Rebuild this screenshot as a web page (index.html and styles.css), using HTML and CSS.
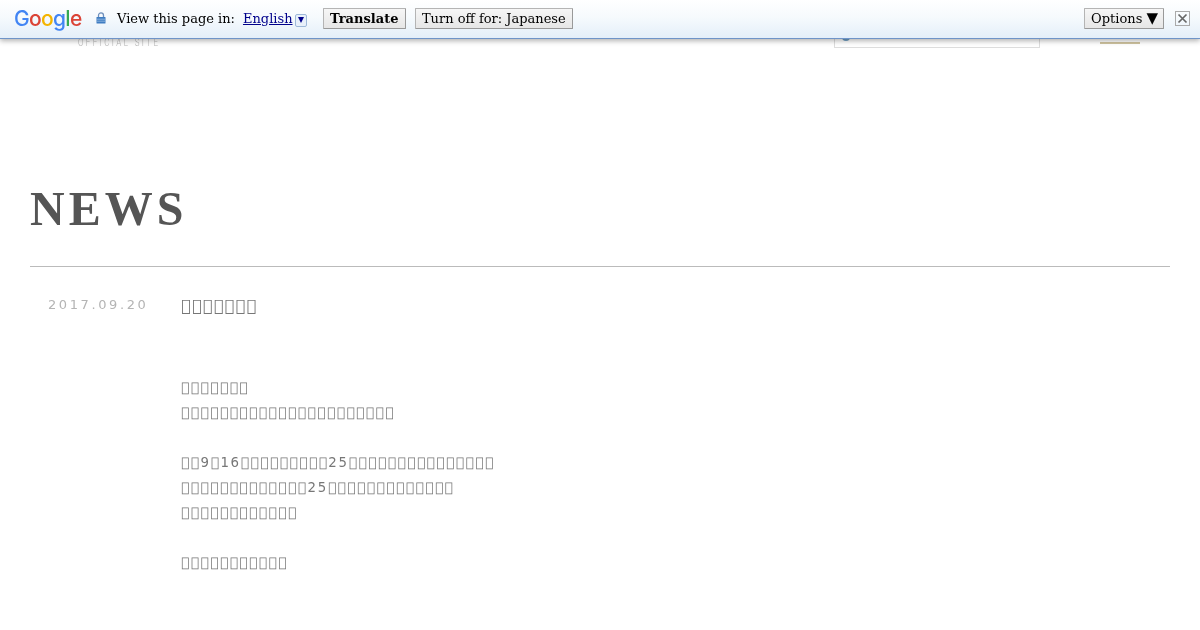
FILE: index.html
```html
<!DOCTYPE html>
<html lang="ja">
<head>
<meta charset="utf-8">
<title>NEWS</title>
<link rel="stylesheet" href="styles.css">
</head>
<body>
<div class="tbar">
  <div class="glogo"><span class="g-b">G</span><span class="g-r">o</span><span class="g-y">o</span><span class="g-b">g</span><span class="g-g">l</span><span class="g-r">e</span></div>
  <svg class="lock" width="10" height="12" viewBox="0 0 10 12"><path d="M2.5 5V3.4a2.5 2.5 0 0 1 5 0V5" fill="none" stroke="#6f90bc" stroke-width="1.3"/><rect x="0.5" y="5" width="9" height="6.5" rx="0.6" fill="#3f7dc2"/><path d="M1 7.2h8M1 9.2h8" stroke="#a9c8e8" stroke-width=".7"/></svg>
  <span class="label">View this page in:</span>
  <a class="lang">English</a>
  <span class="drop"><span class="tri"></span></span>
  <button class="btn first"><b>Translate</b></button>
  <button class="btn">Turn off for: Japanese</button>
  <span class="spacer"></span>
  <button class="btn">Options <span class="caret">▼</span></button>
  <span class="close"><svg width="13" height="13" viewBox="0 0 13 13"><path d="M2.5 2.5l8 8M10.5 2.5l-8 8" stroke="#666" stroke-width="1.7"/></svg></span>
</div>
<header class="head">
  <div class="brand">OFFICIAL SITE</div>
  <div class="search"><span class="search-ico"></span></div>
  <div class="menu"></div>
</header>
<main class="main">
  <h1 class="title">NEWS</h1>
  <article class="entry">
    <div class="date">2017.09.20</div>
    <div class="body">
      <h2 class="subject">&#xE000;&#xE000;&#xE000;&#xE000;&#xE000;&#xE000;&#xE000;</h2>
      <p class="para">&#xE000;&#xE000;&#xE000;&#xE000;&#xE000;&#xE000;&#xE000;<br>&#xE000;&#xE000;&#xE000;&#xE000;&#xE000;&#xE000;&#xE000;&#xE000;&#xE000;&#xE000;&#xE000;&#xE000;&#xE000;&#xE000;&#xE000;&#xE000;&#xE000;&#xE000;&#xE000;&#xE000;&#xE000;&#xE000;</p>
      <p class="para">&#xE000;&#xE000;9&#xE000;16&#xE000;&#xE000;&#xE000;&#xE000;&#xE000;&#xE000;&#xE000;&#xE000;&#xE000;25&#xE000;&#xE000;&#xE000;&#xE000;&#xE000;&#xE000;&#xE000;&#xE000;&#xE000;&#xE000;&#xE000;&#xE000;&#xE000;&#xE000;&#xE000;<br>&#xE000;&#xE000;&#xE000;&#xE000;&#xE000;&#xE000;&#xE000;&#xE000;&#xE000;&#xE000;&#xE000;&#xE000;&#xE000;25&#xE000;&#xE000;&#xE000;&#xE000;&#xE000;&#xE000;&#xE000;&#xE000;&#xE000;&#xE000;&#xE000;&#xE000;&#xE000;<br>&#xE000;&#xE000;&#xE000;&#xE000;&#xE000;&#xE000;&#xE000;&#xE000;&#xE000;&#xE000;&#xE000;&#xE000;</p>
      <p class="para">&#xE000;&#xE000;&#xE000;&#xE000;&#xE000;&#xE000;&#xE000;&#xE000;&#xE000;&#xE000;&#xE000;</p>
    </div>
  </article>
</main>
</body>
</html>
```
FILE: styles.css
```css
html, body { margin: 0; padding: 0; background: #fff; }
body { height: 630px; overflow: hidden; font-family: "DejaVu Sans", sans-serif; color: #555; }

.tbar {
  position: fixed; top: 0; left: 0; right: 0; height: 36px; z-index: 5;
  display: flex; align-items: center; padding: 0 10px 2px 14px;
  background: linear-gradient(#ffffff 0%, #f6fafd 45%, #e4eff9 100%);
  border-bottom: 1px solid #6f94c8;
  box-shadow: 0 2px 5px rgba(0,0,0,.3);
  font: 13px "DejaVu Serif", serif; color: #000;
}
.tbar > * { will-change: opacity; }
.glogo { font: 500 21px "Inter", sans-serif; letter-spacing: -.7px; width: 68px; }
.g-b { color: #4285f4; } .g-r { color: #db4437; } .g-y { color: #f4b400; } .g-g { color: #34a853; }
.lock { margin-left: 14px; }
.label { margin-left: 11px; }
.lang { margin-left: 8px; color: #00008b; text-decoration: underline; }
.drop { width: 10px; height: 11px; margin: 4px 0 0 2px; border: 1px solid #9db8d8; border-radius: 2px; background: #e8f0fa; display: flex; align-items: center; justify-content: center; }
.tri { width: 0; height: 0; border: 3.5px solid transparent; border-top: 6px solid #00008b; border-bottom: 0; }
.btn {
  height: 21px; padding: 0 6px; margin-left: 9px; font: 13px "DejaVu Serif", serif; color: #000; white-space: nowrap;
  background: linear-gradient(#f6f6f6, #e6e6e6); border: 1px solid #b4b4b4; border-bottom-color: #999; border-right-color: #999; border-radius: 1px;
}
.btn.first { margin-left: 16px; padding: 0 6.5px; }
.caret { font-size: 15px; line-height: 1; margin-right: -1px; }
.spacer { flex: 1; }
.close { width: 13px; height: 13px; margin: 1px 0 0 11px; border: 1px solid #aaa; display: flex; }

.head { height: 48px; position: relative; will-change: opacity; }
.brand { position: absolute; left: 78px; top: 39px; font: 300 8px "Roboto", sans-serif; letter-spacing: 2.4px; color: #b4b4b4; transform: scaleY(1.25); transform-origin: 0 100%; }
.search { position: absolute; left: 834px; top: 20px; width: 204px; height: 26px; border: 1px solid #ddd; }
.search-ico { position: absolute; left: 7px; top: 12px; width: 8px; height: 8px; border-radius: 50%; background: #6f9fc4; }
.menu { position: absolute; left: 1100px; top: 42px; width: 40px; height: 2px; background: #cfc3a0; }

.main { padding: 132px 30px 0; will-change: opacity; }
.title { margin: 0; height: 86px; font: 700 48px/57px "Liberation Serif", serif; letter-spacing: 4px; color: #555; border-bottom: 1px solid #bbb; }
.entry { display: flex; }
.date { width: 150px; padding: 30px 0 0 18px; box-sizing: border-box; font: 13px/16px "DejaVu Sans", sans-serif; letter-spacing: 2.6px; color: #b4b4b4; }
.body { padding-left: 1px; }
.subject { margin: 27px 0 0; font: 400 16px/24px "DejaVu Sans", sans-serif; letter-spacing: 1.3px; color: #777; }
.para { margin: 25px 0 0; font: 13.33px/25px "DejaVu Sans", sans-serif; letter-spacing: 1.73px; color: #777; }
.subject + .para { margin-top: 57px; }
```
